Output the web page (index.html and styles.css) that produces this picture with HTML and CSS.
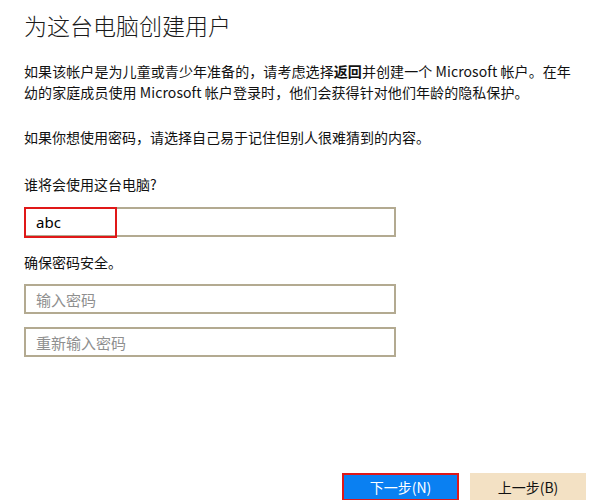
FILE: index.html
```html
<!DOCTYPE html>
<html lang="zh-CN">
<head>
<meta charset="utf-8">
<title>为这台电脑创建用户</title>
<link rel="stylesheet" href="styles.css">
</head>
<body>
<main class="page">
  <h1 class="title">为这台电脑创建用户</h1>
  <p class="intro">如果该帐户是为儿童或青少年准备的，请考虑选择<b>返回</b>并创建一个 Microsoft 帐户。在年<br>幼的家庭成员使用 Microsoft 帐户登录时，他们会获得针对他们年龄的隐私保护。</p>
  <p class="hint">如果你想使用密码，请选择自己易于记住但别人很难猜到的内容。</p>
  <label class="label label-user">谁将会使用这台电脑?</label>
  <div class="field-wrap">
    <div class="field"><span class="value">abc</span></div>
    <div class="highlight"></div>
  </div>
  <label class="label label-pass">确保密码安全。</label>
  <div class="field field-pass"><span class="placeholder">输入密码</span></div>
  <div class="field field-pass2"><span class="placeholder">重新输入密码</span></div>
  <div class="actions">
    <button class="btn btn-next">下一步(N)</button>
    <button class="btn btn-back">上一步(B)</button>
  </div>
</main>
</body>
</html>
```
FILE: styles.css
```css
html, body {
  margin: 0;
  padding: 0;
  background: #ffffff;
}
body {
  font-family: "Noto Sans CJK SC", "Noto Sans", sans-serif;
  color: #111111;
  width: 615px;
  height: 500px;
  overflow: hidden;
}
.page {
  padding: 10px 0 0 24px;
  display: flex;
  flex-direction: column;
  align-items: flex-start;
}
.title {
  margin: 0;
  font-size: 23px;
  line-height: 30px;
  font-weight: 300;
  color: #1a1a1a;
}
.intro {
  margin: 21px 0 0 0;
  font-size: 14px;
  line-height: 21px;
  letter-spacing: 0.08px;
  white-space: nowrap;
}
.intro b {
  font-weight: 700;
}
.hint {
  margin: 24px 0 0 0;
  font-size: 14px;
  line-height: 21px;
}
.label {
  font-size: 14px;
  line-height: 21px;
}
.label-user {
  margin-top: 26px;
}
.label-pass {
  margin-top: 15px;
}
.field-wrap {
  position: relative;
  margin-top: 12px;
}
.field {
  box-sizing: border-box;
  width: 372px;
  height: 30px;
  border: 2px solid #b3aa91;
  background: #fff;
  display: flex;
  align-items: center;
  padding-left: 10px;
  font-size: 15px;
}
.field-pass {
  margin-top: 11px;
}
.field-pass2 {
  margin-top: 13px;
}
.value {
  font-family: "Noto Sans", "Noto Sans CJK SC", sans-serif;
  font-size: 15px;
  font-weight: 400;
  color: #000;
}
.placeholder {
  color: #8f8f8f;
  font-size: 15px;
}
.highlight {
  position: absolute;
  left: 0;
  top: 0;
  width: 93px;
  height: 31px;
  box-sizing: border-box;
  border: 2px solid #e01818;
}
.actions {
  align-self: stretch;
  display: flex;
  justify-content: flex-end;
  gap: 11px;
  margin-top: 116px;
  padding-right: 29px;
}
.btn {
  box-sizing: border-box;
  width: 117px;
  height: 28px;
  border: 0;
  font-family: "Noto Sans CJK SC", "Noto Sans", sans-serif;
  font-size: 14px;
  padding: 0;
}
.btn-next {
  background: #0a80f2;
  color: #ffffff;
  border: 2px solid #e01818;
}
.btn-back {
  width: 116px;
  background: #f3e1c4;
  color: #111;
}
```
